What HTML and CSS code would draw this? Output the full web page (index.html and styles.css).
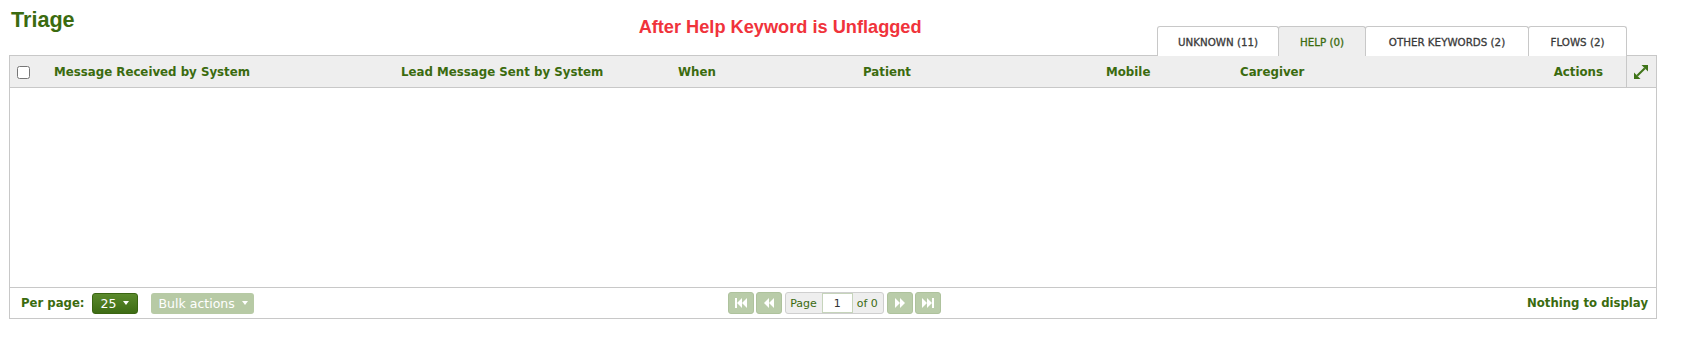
FILE: index.html
```html
<!DOCTYPE html>
<html>
<head>
<meta charset="utf-8">
<title>Triage</title>
<link rel="stylesheet" href="styles.css">
</head>
<body>
<div class="page">
  <div class="topbar">
    <h1 class="title">Triage</h1>
    <div class="notice">After Help Keyword is Unflagged</div>
    <ul class="tabs">
      <li class="tab tab-unknown">UNKNOWN (11)</li>
      <li class="tab tab-help active">HELP (0)</li>
      <li class="tab tab-other">OTHER KEYWORDS (2)</li>
      <li class="tab tab-flows">FLOWS (2)</li>
    </ul>
  </div>
  <div class="panel">
    <div class="thead">
      <div class="th th-check"><input type="checkbox" class="check"></div>
      <div class="th">Message Received by System</div>
      <div class="th">Lead Message Sent by System</div>
      <div class="th">When</div>
      <div class="th">Patient</div>
      <div class="th">Mobile</div>
      <div class="th">Caregiver</div>
      <div class="th th-actions">Actions</div>
      <div class="th th-expand">
        <svg width="14" height="14" viewBox="0 0 14 14" aria-hidden="true">
          <line x1="3.2" y1="10.8" x2="10.8" y2="3.2" stroke="#3f7418" stroke-width="2"/>
          <polygon points="0,14 0,7.5 6.5,14" fill="#3f7418"/>
          <polygon points="14,0 14,6.5 7.5,0" fill="#3f7418"/>
        </svg>
      </div>
    </div>
    <div class="tbody"></div>
    <div class="tfoot">
      <div class="foot-left">
        <span class="per-label">Per page:</span>
        <span class="btn btn-dark">25 <span class="caret"></span></span>
        <span class="btn btn-light">Bulk actions <span class="caret"></span></span>
      </div>
      <div class="pager">
        <span class="pbtn">
          <svg width="14" height="10" viewBox="0 0 14 10"><rect x="1" y="0" width="2" height="10" fill="#fff"/><polygon points="8,0 8,10 3,5" fill="#fff"/><polygon points="13,0 13,10 8,5" fill="#fff"/></svg>
        </span>
        <span class="pbtn">
          <svg width="12" height="10" viewBox="0 0 12 10"><polygon points="6,0 6,10 1,5" fill="#fff"/><polygon points="11,0 11,10 6,5" fill="#fff"/></svg>
        </span>
        <span class="pagebox">
          <span class="pg-label">Page</span>
          <span class="pg-input">1</span>
          <span class="pg-label">of 0</span>
        </span>
        <span class="pbtn">
          <svg width="12" height="10" viewBox="0 0 12 10"><polygon points="1,0 1,10 6,5" fill="#fff"/><polygon points="6,0 6,10 11,5" fill="#fff"/></svg>
        </span>
        <span class="pbtn">
          <svg width="14" height="10" viewBox="0 0 14 10"><polygon points="1,0 1,10 6,5" fill="#fff"/><polygon points="6,0 6,10 11,5" fill="#fff"/><rect x="11" y="0" width="2" height="10" fill="#fff"/></svg>
        </span>
      </div>
      <div class="foot-right">Nothing to display</div>
    </div>
  </div>
</div>
</body>
</html>
```

FILE: styles.css
```css
* { box-sizing: border-box; }
html, body { margin: 0; padding: 0; background: #fff; }
body { font-family: "DejaVu Sans", Verdana, sans-serif; }

.page {
  padding: 0 25px 0 9px;
}

.topbar {
  display: flex;
  align-items: flex-start;
  height: 55px;
}

.title {
  margin: 8px 0 0 2px;
  font-family: "Liberation Sans", Arial, sans-serif;
  font-size: 21.6px;
  line-height: 24px;
  font-weight: bold;
  color: #3b6b0f;
}

.notice {
  margin: 17px 0 0 564px;
  font-family: "Liberation Sans", Arial, sans-serif;
  font-size: 18.2px;
  line-height: 20px;
  font-weight: bold;
  color: #f0333b;
  white-space: nowrap;
}

.tabs {
  list-style: none;
  margin: 0 30px 0 auto;
  padding: 0;
  display: flex;
  align-self: flex-end;
}

.tab {
  height: 30px;
  margin-bottom: -1px;
  padding-top: 9px;
  border: 1px solid #c8c8c8;
  border-bottom: none;
  border-radius: 3px 3px 0 0;
  background: #fff;
  font-size: 10.3px;
  font-weight: normal;
  -webkit-text-stroke: 0.3px currentColor;
  color: #3a3a3a;
  text-align: center;
  white-space: nowrap;
  position: relative;
}
.tab + .tab { margin-left: -1px; }
.tab-unknown { width: 122px; }
.tab-help { width: 88px; }
.tab-other { width: 164px; }
.tab-flows { width: 99px; }
.tab.active {
  background: #eeeeee;
  color: #3b6b0f;
  z-index: 1;
}

.panel {
  border: 1px solid #c8c8c8;
}

.thead {
  display: grid;
  grid-template-columns: 44px 347px 277px 185px 243px 134px 1fr auto 30px;
  align-items: center;
  height: 32px;
  background: #eeeeee;
  border-bottom: 1px solid #c8c8c8;
  font-size: 11.8px;
  font-weight: bold;
  color: #3b6b0f;
}
.th { white-space: nowrap; }
.th-check { padding-left: 7px; display: flex; align-items: center; }
.check { margin: 1px 0 0 0; width: 13px; height: 13px; }
.th-actions { padding-right: 23px; }
.th-expand {
  align-self: stretch;
  border-left: 1px solid #c8c8c8;
  display: flex;
  align-items: center;
  padding-left: 7px;
}

.tbody {
  height: 200px;
  border-bottom: 1px solid #c8c8c8;
}

.tfoot {
  height: 30px;
  display: grid;
  grid-template-columns: 1fr auto 1fr;
  align-items: center;
  font-size: 11.7px;
}

.foot-left {
  display: flex;
  align-items: center;
  padding-left: 11px;
}
.per-label {
  font-weight: bold;
  color: #3b6b0f;
  margin-right: 7px;
}
.btn {
  display: inline-flex;
  align-items: center;
  height: 21px;
  padding: 0 8px;
  border-radius: 3px;
  color: #fff;
  font-size: 12.5px;
  white-space: nowrap;
}
.btn-dark {
  width: 46px;
  background: linear-gradient(#5a8a2c, #3e6c14);
  border: 1px solid #3a6512;
}
.btn-light {
  margin-left: 13px;
  width: 103px;
  background: #b7caa5;
}
.caret {
  display: inline-block;
  margin-left: 7px;
  width: 0;
  height: 0;
  border-left: 3.5px solid transparent;
  border-right: 3.5px solid transparent;
  border-top: 4px solid #fff;
}

.pager {
  display: flex;
  align-items: center;
  gap: 2px;
  margin-left: 3px;
}
.pbtn {
  width: 26px;
  height: 22px;
  border-radius: 3px;
  background: #b9cca9;
  border: 1px solid #aec29d;
  display: flex;
  align-items: center;
  justify-content: center;
}
.pagebox {
  display: flex;
  align-items: center;
  height: 22px;
  margin: 0 1px;
  border: 1px solid #cfcfcf;
  border-radius: 3px;
  background: #eeeeee;
  color: #3b6b0f;
  font-size: 11px;
}
.pg-label { padding: 0 5px 0 4px; }
.pg-input {
  width: 31px;
  height: 20px;
  background: #fff;
  border: 1px solid #c6d4bb;
  display: flex;
  align-items: center;
  justify-content: center;
  color: #333;
}

.foot-right {
  justify-self: end;
  padding-right: 8px;
  font-weight: bold;
  color: #3b6b0f;
}
```
